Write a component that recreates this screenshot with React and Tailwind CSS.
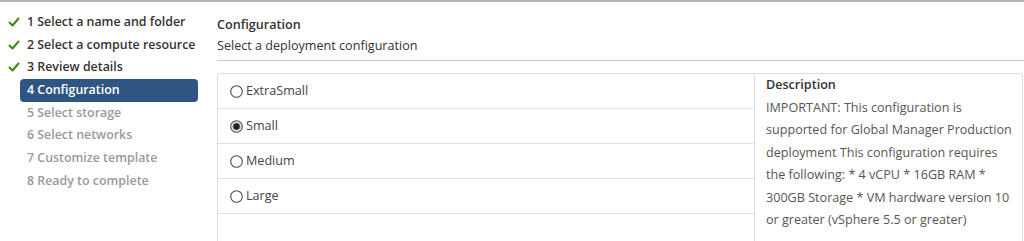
import React from 'react';

// ─── Data ─────────────────────────────────────────────────────────────────────

const steps = [
  { n: 1, label: 'Select a name and folder', state: 'done' },
  { n: 2, label: 'Select a compute resource', state: 'done' },
  { n: 3, label: 'Review details', state: 'done' },
  { n: 4, label: 'Configuration', state: 'active' },
  { n: 5, label: 'Select storage', state: 'todo' },
  { n: 6, label: 'Select networks', state: 'todo' },
  { n: 7, label: 'Customize template', state: 'todo' },
  { n: 8, label: 'Ready to complete', state: 'todo' },
];

const sizes = ['ExtraSmall', 'Small', 'Medium', 'Large'];

// ─── Icons ────────────────────────────────────────────────────────────────────

function Check() {
  return (
    <svg className="w-[12px] h-[12px]" viewBox="0 0 12 12" fill="none">
      <path d="M1.5 6.5 4.5 9.5 10.5 2.5" stroke="#3c8a12" strokeWidth="2" strokeLinecap="round" strokeLinejoin="round" />
    </svg>
  );
}

function Radio({ checked }) {
  return (
    <svg className="w-[13px] h-[13px] shrink-0" viewBox="0 0 13 13">
      <circle cx="6.5" cy="6.5" r="5.8" fill="#fff" stroke="#4a4a4a" strokeWidth="1.1" />
      {checked && <circle cx="6.5" cy="6.5" r="4.6" fill="#c8c8c8" />}
      {checked && <circle cx="6.5" cy="6.5" r="3.2" fill="#222" />}
    </svg>
  );
}

// ─── Sidebar ──────────────────────────────────────────────────────────────────

function Step({ step }) {
  if (step.state === 'active') {
    return (
      <div className="h-[23px] w-[178px] ml-[20px] pl-[7px] flex items-center rounded-[4px] bg-[#2f5682] text-white font-semibold">
        {step.n} {step.label}
      </div>
    );
  }
  return (
    <div className={`h-[22.6px] flex items-center font-semibold ${step.state === 'done' ? 'text-[#333]' : 'text-[#9a9a9a]'}`}>
      <span className="w-[27px] pl-[8px] flex items-center">{step.state === 'done' && <Check />}</span>
      {step.n} {step.label}
    </div>
  );
}

// ─── Main page ────────────────────────────────────────────────────────────────

export default function App() {
  return (
    <div
      className="w-[1024px] h-[241px] overflow-hidden bg-white border-t-2 border-[#b5b5b5] flex"
      style={{ fontFamily: '"Open Sans", "Noto Sans", sans-serif' }}
    >
      <nav className="w-[217px] shrink-0 pt-[9px] text-[12.4px]">
        {steps.map((s) => <Step key={s.n} step={s} />)}
      </nav>

      <main className="flex-1 min-w-0 pt-[13px] text-[12.6px]">
        <h2 className="font-semibold text-[#333] leading-[20px]">Configuration</h2>
        <p className="text-[#333] leading-[22px]">Select a deployment configuration</p>
        <div className="mt-[3px] border-t border-[#c8c8c8]" />

        <div className="mt-[12px] mr-[1px] h-[200px] border border-[#dcdcdc] rounded-[3px] flex">
          <div className="w-[537px] shrink-0 border-r border-[#dcdcdc]">
            {sizes.map((s) => (
              <label key={s} className="h-[35px] pl-[12px] flex items-center gap-[3px] border-b border-[#e0e0e0] text-[#444]">
                <Radio checked={s === 'Small'} />
                {s}
              </label>
            ))}
          </div>
          <div className="flex-1 pl-[11px] pr-[4px] leading-[22.5px] text-[#565656]">
            <div className="font-semibold text-[#333]">Description</div>
            <p>
              IMPORTANT: This configuration is supported for Global Manager Production deployment This
              configuration requires the following: * 4 vCPU * 16GB RAM * 300GB Storage * VM hardware
              version 10 or greater (vSphere 5.5 or greater)
            </p>
          </div>
        </div>
      </main>
    </div>
  );
}
